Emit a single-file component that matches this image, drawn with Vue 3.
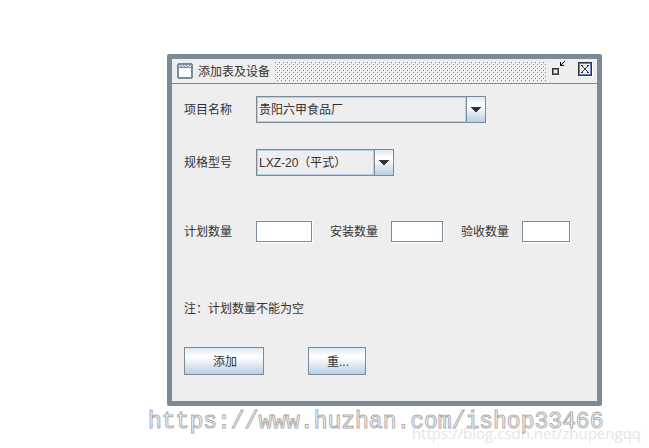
<script setup>
import { ref } from 'vue'

const project = ref('贵阳六甲食品厂')
const model = ref('LXZ-20（平式）')
const planned = ref('')
const installed = ref('')
const accepted = ref('')

function reset() {
  planned.value = ''
  installed.value = ''
  accepted.value = ''
}
</script>

<template>
  <main class="desktop">
    <section class="frame" aria-labelledby="frame-title">
      <header class="titlebar">
        <svg class="app-icon" width="16" height="16" viewBox="0 0 16 16" shape-rendering="crispEdges" aria-hidden="true">
          <rect x="1" y="0" width="14" height="16" fill="#7a8a99" />
          <rect x="0" y="1" width="16" height="14" fill="#7a8a99" />
          <rect x="2" y="5" width="12" height="9" fill="#fff" />
          <rect x="2" y="2" width="12" height="2" fill="#dde8f3" />
          <path d="M3 2h1v1h-1zM6 2h1v1h-1zM9 2h1v1h-1zM12 2h1v1h-1zM4 3h1v1h-1zM7 3h1v1h-1zM10 3h1v1h-1z" fill="#6382bf" />
        </svg>
        <h1 id="frame-title" class="title">添加表及设备</h1>
        <svg class="grip" height="19" shape-rendering="crispEdges" aria-hidden="true">
          <defs>
            <pattern id="bumps" width="4" height="4" patternUnits="userSpaceOnUse">
              <path d="M0 0h1v1h-1zM2 2h1v1h-1z" fill="#7a8a99" />
              <path d="M1 1h1v1h-1zM3 3h1v1h-1z" fill="#fff" />
            </pattern>
          </defs>
          <rect width="100%" height="100%" fill="url(#bumps)" />
        </svg>
        <button class="tool restore" type="button" aria-label="还原">
          <svg width="14" height="16" viewBox="0 0 14 16" shape-rendering="crispEdges" aria-hidden="true">
            <path d="M1 9h7v7h-7z" fill="#fff" />
            <path d="M0 8h7v7h-7z" fill="#333" />
            <path d="M1 9h5v5h-5z" fill="#6382bf" />
            <path d="M2 10h3v3h-3z" fill="#eee" />
            <path d="M8 2h1v3h3v1h-4zM9 4h1v-1h1v-1h1v-1h1v1h-1v1h-1v1h-1v1h-1z" fill="#000" />
          </svg>
        </button>
        <button class="tool close" type="button" aria-label="关闭">
          <svg width="15" height="15" viewBox="0 0 15 15" shape-rendering="crispEdges" aria-hidden="true">
            <path d="M1 1h14v14h-14z" fill="#fff" />
            <path d="M0 0h14v14h-14z" fill="#333" />
            <path d="M1 1h12v12h-12z" fill="#6382bf" />
            <path d="M2 2h10v10h-10z" fill="#eee" />
            <path d="M3 3h2v1h-2zM9 3h2v1h-2zM4 4h1v1h-1zM9 4h1v1h-1zM5 5h1v1h-1zM8 5h1v1h-1zM6 6h2v2h-2zM5 8h1v1h-1zM8 8h1v1h-1zM4 9h1v1h-1zM9 9h1v1h-1zM3 10h2v1h-2zM9 10h2v1h-2z" fill="#333" />
          </svg>
        </button>
      </header>

      <form class="form" @submit.prevent>
        <div class="row">
          <label class="caption" for="project">项目名称</label>
          <div class="combo wide">
            <select id="project" v-model="project">
              <option>贵阳六甲食品厂</option>
            </select>
            <span class="arrow" aria-hidden="true">
              <svg width="10" height="5" viewBox="0 0 10 5" shape-rendering="crispEdges"><path d="M0 0h10v1h-1v1h-1v1h-1v1h-1v1h-2v-1h-1v-1h-1v-1h-1v-1h-1z" fill="#333" /></svg>
            </span>
          </div>
        </div>

        <div class="row">
          <label class="caption" for="model">规格型号</label>
          <div class="combo">
            <select id="model" v-model="model">
              <option>LXZ-20（平式）</option>
            </select>
            <span class="arrow" aria-hidden="true">
              <svg width="10" height="5" viewBox="0 0 10 5" shape-rendering="crispEdges"><path d="M0 0h10v1h-1v1h-1v1h-1v1h-1v1h-2v-1h-1v-1h-1v-1h-1v-1h-1z" fill="#333" /></svg>
            </span>
          </div>
        </div>

        <div class="row counts">
          <label class="caption" for="planned">计划数量</label>
          <input id="planned" v-model="planned" class="field first" type="text">
          <label for="installed">安装数量</label>
          <input id="installed" v-model="installed" class="field second" type="text">
          <label for="accepted">验收数量</label>
          <input id="accepted" v-model="accepted" class="field third" type="text">
        </div>

        <p class="note">注：计划数量不能为空</p>

        <div class="actions">
          <button class="push add" type="submit">添加</button>
          <button class="push reset" type="button" @click="reset">重...</button>
        </div>
      </form>
    </section>
    <span class="mark-blog">https://blog.csdn.net/zhupengqq</span>
    <span class="mark-shop">https://www.huzhan.com/ishop33466</span>
  </main>
</template>

<style>
body {
  background: #fff;
}
</style>

<style scoped>
.desktop {
  position: relative;
  box-sizing: border-box;
  min-height: 100vh;
  padding: 54px 47px 42px 167px;
  overflow: hidden;
  color: #333;
  font: 12px/16px "Liberation Sans", "Noto Sans CJK SC", sans-serif;
}

.frame {
  border: 5px solid #7a8a99;
  border-radius: 2px;
  background: #eee;
}

.titlebar {
  display: flex;
  align-items: center;
  height: 24px;
  padding: 0 4px 0 5px;
  border-bottom: 1px solid #7a8a99;
}

.app-icon {
  flex: none;
}

.title {
  flex: none;
  margin: 0 5px;
  padding-top: 1px;
  font: inherit;
}

.grip {
  flex: 1;
  min-width: 0;
  width: 0;
  margin-right: 6px;
}

.tool {
  display: flex;
  flex: none;
  margin: 0;
  padding: 0;
  border: 0;
  background: none;
}

.restore {
  margin: 0 12px 6px 0;
}

.close {
  margin-bottom: 3px;
}

.form {
  padding: 12px 12px 26px;
}

.row {
  display: flex;
  align-items: center;
  margin-bottom: 26px;
}

.caption {
  flex: none;
  width: 72px;
}

.combo {
  display: flex;
  box-sizing: border-box;
  width: 138px;
  height: 27px;
  border: 1px solid #7a8a99;
}

.combo.wide {
  width: 230px;
}

.combo select {
  flex: 1;
  min-width: 0;
  margin: 0;
  padding: 0 0 0 1px;
  appearance: none;
  border: 1px solid #b8cfe5;
  border-radius: 0;
  background: #eee;
  color: inherit;
  font: inherit;
}

.arrow {
  display: flex;
  align-items: center;
  justify-content: center;
  width: 18px;
  border-left: 1px solid #7a8a99;
  background: linear-gradient(#dde8f3, #fff 30%, #fff 36%, #b8cfe5);
  pointer-events: none;
}

.counts {
  margin: 45px 0 59px;
}

.field {
  box-sizing: border-box;
  height: 21px;
  margin: 0 18px 0 0;
  padding: 0 2px;
  border: 1px solid #7a8a99;
  border-radius: 0;
  background: #fff;
  box-shadow: 1px 1px #fff;
  color: inherit;
  font: inherit;
}

.field.first {
  width: 56px;
}

.field.second {
  width: 52px;
  margin-left: 13px;
}

.field.third {
  width: 48px;
  margin: 0 0 0 13px;
}

.note {
  margin: 0 0 30px;
}

.actions {
  display: flex;
  gap: 44px;
}

.push {
  height: 28px;
  margin: 0;
  padding: 2px 0 0 2px;
  border: 1px solid #7a8a99;
  border-radius: 0;
  background: linear-gradient(#dde8f3, #fff 30%, #fff 36%, #b8cfe5);
  color: inherit;
  font: inherit;
}

.push.add {
  width: 80px;
}

.push.reset {
  width: 58px;
}

.mark-blog,
.mark-shop {
  position: absolute;
  white-space: nowrap;
  pointer-events: none;
}

.mark-blog {
  right: 8px;
  bottom: 5px;
  color: #e4e4e4;
  font: 15px/20px "Open Sans", sans-serif;
}

.mark-shop {
  left: 148px;
  bottom: 11px;
  color: #fff;
  font: 23px/30px "Liberation Mono", monospace;
  -webkit-text-stroke: 1px #999;
  opacity: 0.8;
}
</style>
